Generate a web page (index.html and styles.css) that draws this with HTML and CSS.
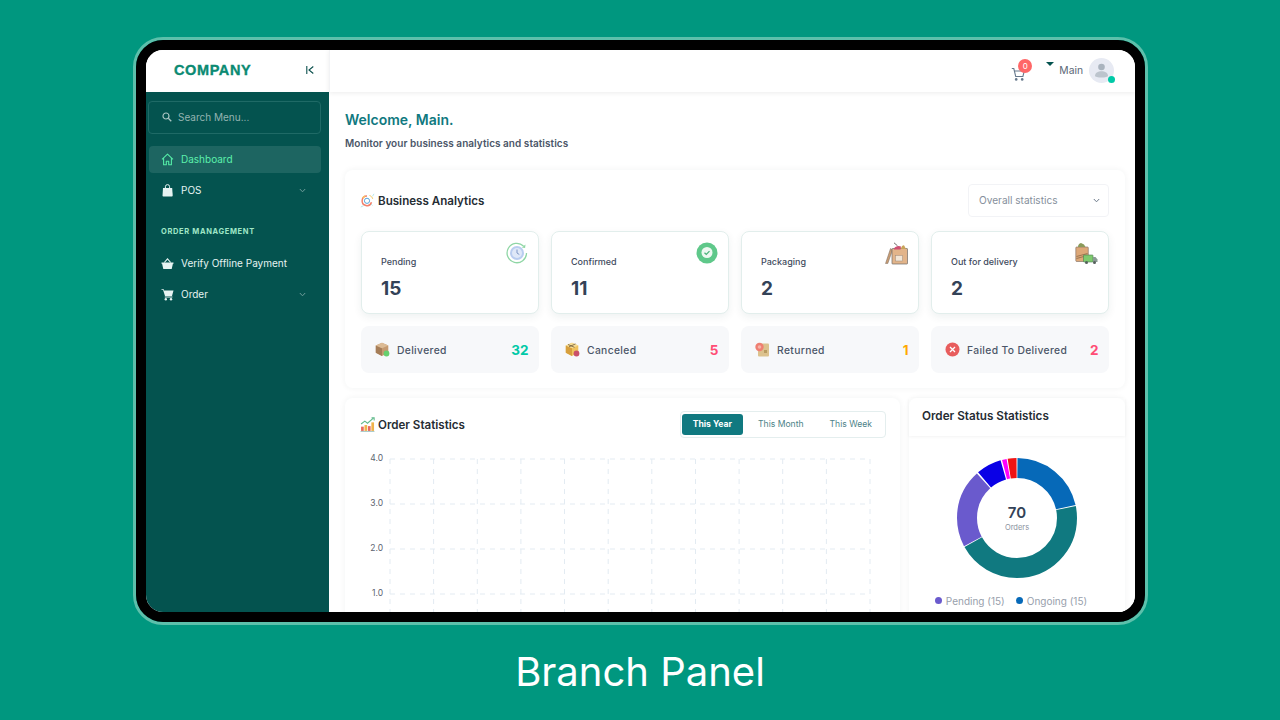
FILE: index.html
```html
<!DOCTYPE html>
<html lang="en">
<head>
  <meta charset="UTF-8" />
  <title>Branch Panel</title>
  <link rel="stylesheet" href="styles.css">
</head>
<body>
  <div class="device">
    <div class="screen">

      <div class="sidebar">
        <div class="brand">
          <span class="logo">COMPANY</span>
          <svg class="collapse" width="8" height="8" viewBox="0 0 8 8"><path d="M.8 0v8M7.300 .5 3 4l4.300 3.500" fill="none" stroke="#0a4f4c" stroke-width="1.100"/></svg>
        </div>
        <div class="side-body">
          <div class="search">
            <svg width="10" height="10" viewBox="0 0 10 10"><circle cx="4" cy="4" r="3" fill="none" stroke="#a9c4c2" stroke-width="1.2"/><path d="M6.3 6.3 9.3 9.3" stroke="#a9c4c2" stroke-width="1.3"/></svg>
            <span>Search Menu...</span>
          </div>
          <a class="nav-item active">
            <svg width="13" height="13" viewBox="0 0 13 13"><path d="M1 6.3 6.5 1.2 12 6.3M2.6 5.2v6.6h2.7V8.2h2.4v3.6h2.7V5.2" fill="none" stroke="#54eba6" stroke-width="1.1" stroke-linejoin="round"/></svg>
            <span>Dashboard</span>
          </a>
          <a class="nav-item">
            <svg width="13" height="13" viewBox="0 0 13 13"><path d="M2 4h9.2l.5 7.6a.9.9 0 0 1-.9.9H2.400a.9.9 0 0 1-.9-.9z" fill="#e6f3f2"/><path d="M4.400 5V2.700a2.100 2.100 0 0 1 4.200 0V5" fill="none" stroke="#e6f3f2" stroke-width="1"/></svg>
            <span>POS</span>
            <svg class="chev" width="7" height="5" viewBox="0 0 7 5"><path d="M.8 1 3.500 3.800 6.200 1" fill="none" stroke="#6f9d9a" stroke-width="1"/></svg>
          </a>
          <div class="nav-label">ORDER MANAGEMENT</div>
          <a class="nav-item">
            <svg width="13" height="13" viewBox="0 0 13 13"><path d="M.5 5.500h12v1.200h-.6L10.700 12H2.300L1.100 6.700H.5z" fill="#e6f3f2"/><path d="M3.300 5.500 6.500 1.800l3.200 3.700" fill="none" stroke="#e6f3f2" stroke-width="1.100"/></svg>
            <span>Verify Offline Payment</span>
          </a>
          <a class="nav-item">
            <svg width="13" height="13" viewBox="0 0 13 13"><path d="M.5 1h2l.5 1.500h9.500L11 8H4L2 1.800H.5z" fill="#e6f3f2"/><path d="M3.800 8.500h7.600v1H3.800z" fill="#e6f3f2"/><circle cx="4.800" cy="11.300" r="1.200" fill="#e6f3f2"/><circle cx="10" cy="11.300" r="1.200" fill="#e6f3f2"/></svg>
            <span>Order</span>
            <svg class="chev" width="7" height="5" viewBox="0 0 7 5"><path d="M.8 1 3.500 3.800 6.200 1" fill="none" stroke="#6f9d9a" stroke-width="1"/></svg>
          </a>
        </div>
      </div>

      <div class="main">
        <div class="topbar">
          <div class="cart">
            <svg width="15" height="15" viewBox="0 0 15 15"><path d="M.8 1.500h2l1.900 8h7.200l1.400-5.500H3.500" fill="none" stroke="#66798c" stroke-width="1.100"/><circle cx="5.200" cy="12.400" r="1.300" fill="#66798c"/><circle cx="11.200" cy="12.400" r="1.300" fill="#66798c"/></svg>
            <span class="cart-badge">0</span>
          </div>
          <span class="caret"></span>
          <span class="user-name">Main</span>
          <div class="avatar">
            <svg width="25" height="25" viewBox="0 0 25 25"><circle cx="12.500" cy="12.500" r="12.500" fill="#e7eaf3"/><circle cx="12.500" cy="9" r="3.300" fill="#a9b3be"/><path d="M6 18c0-3.200 3-4.800 6.500-4.800S19 14.800 19 18c0 .9-3 1.500-6.500 1.500S6 18.900 6 18z" fill="#bcc4cd"/></svg>
            <span class="online"></span>
          </div>
        </div>

        <div class="content">
          <h1 class="welcome">Welcome, Main.</h1>
          <p class="subtitle">Monitor your business analytics and statistics</p>

          <div class="card analytics">
            <div class="card-head">
              <div class="card-title">
                <svg width="15" height="15" viewBox="0 0 15 15"><path d="M7 3a4.800 4.800 0 1 0 4.500 6.300" fill="none" stroke="#f2816b" stroke-width="1.500"/><path d="M2.600 5 5 3" stroke="#f7c35f" stroke-width="1.500"/><circle cx="7" cy="7.800" r="2.600" fill="none" stroke="#5aa5d8" stroke-width="1"/><path d="M9.500 2.500c1.700.5 2.800 1.800 3.200 3.300" fill="none" stroke="#f3c75e" stroke-width="1"/><path d="M14 .8l-1.500 2.500M.8 14l2.700-1.200M11 11l1.500 1.500" fill="none" stroke="#a5e3e6" stroke-width=".8"/></svg>
                <span>Business Analytics</span>
              </div>
              <div class="select">
                <span>Overall statistics</span>
                <svg width="7" height="5" viewBox="0 0 7 5"><path d="M.8 1 3.500 3.800 6.200 1" fill="none" stroke="#6c7a8a" stroke-width="1"/></svg>
              </div>
            </div>

            <div class="stat-grid">
              <div class="stat">
                <div class="stat-label">Pending</div>
                <div class="stat-value">15</div>
                <svg class="stat-icon" width="22" height="22" viewBox="0 0 22 22"><path d="M20.500 11A9.700 9.700 0 1 1 17.500 4" fill="none" stroke="#8fd6a5" stroke-width="1.300"/><path d="m19.500 2.500-.4 3.500-3.300-.6z" fill="#8fd6a5"/><circle cx="11" cy="11" r="7" fill="#b9cdf0"/><circle cx="11" cy="11" r="5" fill="#dfe8f8"/><path d="M11 7.500V11l2.300 1.500" fill="none" stroke="#7e97c6" stroke-width="1"/></svg>
              </div>
              <div class="stat">
                <div class="stat-label">Confirmed</div>
                <div class="stat-value">11</div>
                <svg class="stat-icon" width="22" height="22" viewBox="0 0 22 22"><circle cx="11" cy="11" r="10.500" fill="#5fc88a"/><path d="M11 .5A10.500 10.500 0 0 1 11 21.500 10 10 0 0 0 11 .5z" fill="#3ea56c"/><circle cx="11" cy="10.500" r="5.500" fill="#eef8f1"/><path d="m8.500 10.700 1.800 1.700 3.200-3.300" fill="none" stroke="#4bb37a" stroke-width="1.300"/></svg>
              </div>
              <div class="stat">
                <div class="stat-label">Packaging</div>
                <div class="stat-value">2</div>
                <svg class="stat-icon" width="23" height="23" viewBox="0 0 23 23"><path d="M5.500 6.500 .5 21.500h2.300L7.500 8z" fill="#c79c72" stroke="#7a6a60" stroke-width=".5"/><rect x="7" y="6.500" width="15.500" height="15.500" rx=".6" fill="#e2b48a" stroke="#6f6a68" stroke-width=".7"/><path d="M9 6.500c1-2.500 5-3.200 7-2l-.5 3H9z" fill="#cf4f72"/><path d="M16 7c0-2.500 1.500-3.600 3-3.800L21 7z" fill="#c9a45a"/><path d="M9 .8 12.500 3.800" stroke="#6f6a68" stroke-width="1"/><rect x="10.500" y="13.500" width="7" height="5.500" fill="#f2e5d5" stroke="#9b8a7c" stroke-width=".5"/></svg>
              </div>
              <div class="stat">
                <div class="stat-label">Out for delivery</div>
                <div class="stat-value">2</div>
                <svg class="stat-icon" width="23" height="23" viewBox="0 0 23 23"><rect x=".8" y="5" width="12.500" height="14.500" rx=".8" fill="#dda878" stroke="#7a6a60" stroke-width=".6"/><path d="M3 5c0-2 1-3.500 3-4l3 1.500L10.500 5z" fill="#8a9a5a"/><path d="m1.500 14.500 11-3M1.500 16.500l11-3" stroke="#8a6a48" stroke-width=".8"/><rect x="8.500" y="13" width="9.500" height="7" rx=".6" fill="#7ecb6e" stroke="#4d7a52" stroke-width=".6"/><path d="M18 15h2.500l2 2.500V20H18z" fill="#8a9a94"/><circle cx="11.500" cy="20.500" r="1.500" fill="#55605c"/><circle cx="19.500" cy="20.500" r="1.500" fill="#55605c"/></svg>
              </div>

              <div class="mini">
                <svg width="15" height="15" viewBox="0 0 15 15"><path d="M7 .8 13.300 3.500v7.300L7 14 .8 10.800V3.500z" fill="#c59a70"/><path d="M7 6.300V14L.8 10.800V3.500z" fill="#a57d58"/><path d="M.8 3.500 7 .8l6.300 2.700L7 6.300z" fill="#dcbb95"/><circle cx="11.500" cy="11.500" r="2.900" fill="#66cf6e"/></svg>
                <span class="mini-label">Delivered</span>
                <span class="mini-num green">32</span>
              </div>
              <div class="mini">
                <svg width="15" height="15" viewBox="0 0 15 15"><path d="M7 .8 13.300 3.500v7.300L7 14 .8 10.800V3.500z" fill="#efc25e"/><path d="M7 6.300V14L.8 10.800V3.500z" fill="#d79f3c"/><path d="M.8 3.500 7 .8l6.300 2.700L7 6.300z" fill="#f6dc94"/><path d="M3 2.500 9.500 5.300M10.500 1.900 4 4.800" stroke="#6f5a3a" stroke-width=".8"/><circle cx="11.500" cy="11.500" r="2.900" fill="#c9506a"/></svg>
                <span class="mini-label">Canceled</span>
                <span class="mini-num pink">5</span>
              </div>
              <div class="mini">
                <svg width="15" height="15" viewBox="0 0 15 15"><rect x="3" y="1.500" width="11" height="13" rx="1" fill="#dcc28e"/><path d="M9 8h3v3H9z" fill="#b89c62"/><circle cx="4.500" cy="5" r="4.200" fill="#ef7f72"/><circle cx="4.500" cy="5" r="1.800" fill="#f7b3a8"/></svg>
                <span class="mini-label">Returned</span>
                <span class="mini-num orange">1</span>
              </div>
              <div class="mini">
                <svg width="15" height="15" viewBox="0 0 15 15"><circle cx="7.500" cy="7.500" r="7" fill="#e85d5d"/><path d="m5 5 5 5M10 5l-5 5" stroke="#fff" stroke-width="1.300"/></svg>
                <span class="mini-label">Failed To Delivered</span>
                <span class="mini-num pink">2</span>
              </div>
            </div>
          </div>

          <div class="bottom-row">
            <div class="card order-stats">
              <div class="order-head">
                <div class="card-title">
                  <svg width="15" height="15" viewBox="0 0 14 14"><rect x="1" y="9" width="2.500" height="4" fill="#e86a5c"/><rect x="4.200" y="7.500" width="2.500" height="5.500" fill="#f0b34a"/><rect x="7.400" y="8.500" width="2.500" height="4.500" fill="#e86a5c"/><rect x="10.600" y="5" width="2.500" height="8" fill="#f0b34a"/><path d="M1 6.500 4.500 3.800l2.500 2 5.500-4.800" fill="none" stroke="#5fb98a" stroke-width="1"/><path d="m10.800.8h2.400v2.400" fill="none" stroke="#5fb98a" stroke-width="1"/><path d="M.5 13.500h13" stroke="#7aa" stroke-width=".6"/></svg>
                  <span>Order Statistics</span>
                </div>
                <div class="tabs">
                  <span class="tab on">This Year</span>
                  <span class="tab">This Month</span>
                  <span class="tab">This Week</span>
                </div>
              </div>
              <svg class="chart" width="526" height="175" viewBox="0 0 526 175">
                <g class="grid-lines">
                  <path d="M30 9H510M30 54H510M30 99H510M30 144H510"/>
                  <path d="M30 9V175M73.600 9V175M117.300 9V175M160.900 9V175M204.500 9V175M248.200 9V175M291.800 9V175M335.500 9V175M379.100 9V175M422.700 9V175M466.400 9V175M510 9V175"/>
                </g>
                <g class="axis-labels">
                  <text x="23" y="11">4.0</text>
                  <text x="23" y="56">3.0</text>
                  <text x="23" y="101">2.0</text>
                  <text x="23" y="146">1.0</text>
                </g>
              </svg>
            </div>

            <div class="card order-status">
              <div class="status-head">Order Status Statistics</div>
              <div class="status-body">
                <div class="donut">
                  <svg width="122" height="122" viewBox="0 0 122 122">
                    <g transform="rotate(-90 61 61)" fill="none" stroke-width="20">
                      <circle cx="61" cy="61" r="50" pathLength="360" stroke="#0669b8" stroke-dasharray="77 283" stroke-dashoffset="-0.5"/>
                      <circle cx="61" cy="61" r="50" pathLength="360" stroke="#107980" stroke-dasharray="162.500 197.500" stroke-dashoffset="-78.500"/>
                      <circle cx="61" cy="61" r="50" pathLength="360" stroke="#6a5acd" stroke-dasharray="76 284" stroke-dashoffset="-242"/>
                      <circle cx="61" cy="61" r="50" pathLength="360" stroke="#0a00e6" stroke-dasharray="24.500 335.500" stroke-dashoffset="-319.500"/>
                      <circle cx="61" cy="61" r="50" pathLength="360" stroke="#ff00ff" stroke-dasharray="4.500 355.500" stroke-dashoffset="-345.500"/>
                      <circle cx="61" cy="61" r="50" pathLength="360" stroke="#f01414" stroke-dasharray="8.500 351.500" stroke-dashoffset="-351"/>
                    </g>
                  </svg>
                  <div class="donut-center">
                    <strong>70</strong>
                    <span>Orders</span>
                  </div>
                </div>
                <div class="legend">
                  <span class="legend-item"><i class="dot purple"></i>Pending (15)</span>
                  <span class="legend-item"><i class="dot blue"></i>Ongoing (15)</span>
                </div>
              </div>
            </div>
          </div>
        </div>
      </div>

    </div>
  </div>
  <div class="caption">Branch Panel</div>
</body>
</html>
```

FILE: styles.css
```css
* {
  box-sizing: border-box;
}

html, body {
  height: 720px;
  overflow: hidden;
}

body {
  margin: 0;
  background: #00977f;
  font-family: Inter, 'Noto Sans', sans-serif;
  color: #334257;
}

.device {
  width: 1015px;
  height: 588px;
  margin: 37px 0 0 133px;
  border: 3px solid #5cc0ab;
  border-radius: 30px;
}

.screen {
  display: flex;
  width: 1009px;
  height: 582px;
  border: 10px solid #000;
  border-radius: 27px;
  background: #fff;
  overflow: hidden;
}

.caption {
  margin-top: 23px;
  text-align: center;
  font-size: 40px;
  line-height: 48px;
  color: #fff;
}

/* sidebar */
.sidebar {
  width: 183px;
  flex: none;
  display: flex;
  flex-direction: column;
}

.brand {
  height: 42px;
  flex: none;
  display: flex;
  align-items: center;
  justify-content: space-between;
  padding: 0 15px 2px 28px;
  background: #fff;
}

.logo {
  font-family: 'Liberation Sans', Arial, sans-serif;
  font-size: 14.5px;
  font-weight: 700;
  letter-spacing: .6px;
  color: #0b8a72;
  -webkit-text-stroke: .35px #0b8a72;
}

.side-body {
  flex: 1;
  padding: 9px 8px 0 2px;
  background: #04534f;
}

.search {
  display: flex;
  align-items: center;
  gap: 6px;
  height: 33px;
  padding: 0 0 1px 13px;
  margin-bottom: 12px;
  border: 1px solid #1f6a66;
  border-radius: 4px;
  font-size: 10px;
  color: #93b3b1;
}

.nav-item {
  display: flex;
  align-items: center;
  gap: 7px;
  height: 27px;
  margin: 0 0 4px 1px;
  padding: 0 15px 1px 12px;
  border-radius: 4px;
  font-size: 10px;
  color: #e6f3f2;
}

.nav-item.active {
  background: #1d6561;
  color: #5cf0ac;
}

.chev {
  margin-left: auto;
}

.nav-label {
  margin: 23px 0 13px 13px;
  font-size: 7.5px;
  line-height: 10px;
  font-weight: 700;
  letter-spacing: .65px;
  color: #9fe6c6;
}

/* top bar */
.main {
  flex: 1;
  min-width: 0;
  display: flex;
  flex-direction: column;
}

.topbar {
  position: relative;
  height: 42px;
  flex: none;
  display: flex;
  align-items: center;
  justify-content: flex-end;
  padding: 0 21px 2px 0;
  background: #fff;
  border-left: 1px solid #f2f3f5;
  box-shadow: 0 1px 5px rgba(0, 0, 0, .08);
}

.cart {
  position: relative;
  width: 20px;
  height: 15px;
  margin: 6px 15px 0 0;
}

.cart-badge {
  position: absolute;
  top: -7px;
  left: 7px;
  width: 14px;
  height: 14px;
  border-radius: 50%;
  background: #ff6767;
  color: #fff;
  font-size: 8px;
  line-height: 14px;
  text-align: center;
}

.caret {
  width: 0;
  height: 0;
  margin: 0 5px 12px 0;
  border-left: 4.500px solid transparent;
  border-right: 4.500px solid transparent;
  border-top: 4.500px solid #04534f;
}

.user-name {
  margin-right: 6px;
  font-size: 10.3px;
  color: #5b6777;
}

.avatar {
  position: relative;
  width: 25px;
  height: 25px;
}

.avatar svg {
  display: block;
}

.online {
  position: absolute;
  right: -1px;
  bottom: 0;
  width: 7px;
  height: 7px;
  border-radius: 50%;
  background: #00c9a7;
}

/* content */
.content {
  flex: 1;
  min-height: 0;
  padding: 18px 10px 0 16px;
  background: #fff;
}

.welcome {
  margin: 0;
  font-size: 14px;
  line-height: 20px;
  font-weight: 600;
  color: #107980;
}

.subtitle {
  margin: 6px 0 0;
  font-size: 10px;
  line-height: 14px;
  font-weight: 600;
  letter-spacing: .04px;
  color: #4b5668;
}

.card {
  background: #fff;
  border-radius: 8px;
  box-shadow: 0 0 6px rgba(0, 50, 50, .06);
}

.analytics {
  margin-top: 20px;
  height: 218px;
  padding: 14px 16px 0 16px;
}

.card-head {
  display: flex;
  align-items: center;
  justify-content: space-between;
  margin-bottom: 14px;
}

.card-title {
  display: flex;
  align-items: center;
  gap: 3px;
  margin-left: -1px;
  font-size: 11.6px;
  font-weight: 600;
  color: #262d34;
}

.select {
  display: flex;
  align-items: center;
  justify-content: space-between;
  width: 141px;
  height: 33px;
  padding: 0 8px 1px 10px;
  border: 1px solid #f2f3f6;
  border-radius: 4px;
  font-size: 10.1px;
  color: #868f9c;
}

.stat-grid {
  display: grid;
  grid-template-columns: repeat(4, 177.5px);
  gap: 12px 12.5px;
}

.stat {
  position: relative;
  height: 83px;
  padding: 24px 19px 0;
  border: 1px solid #e2eeec;
  border-radius: 8px;
  background: #fff;
  box-shadow: 0 3px 8px rgba(0, 60, 60, .07);
}

.stat-label {
  font-size: 9px;
  line-height: 12px;
  font-weight: 500;
  color: #3f4b5e;
}

.stat-value {
  margin-top: 9px;
  font-size: 19px;
  line-height: 23px;
  font-weight: 700;
  color: #334257;
}

.stat-icon {
  position: absolute;
  top: 10px;
  right: 10px;
}

.mini {
  display: flex;
  align-items: center;
  gap: 7px;
  height: 47px;
  padding: 0 10px 0 14px;
  border-radius: 8px;
  background: #f7f8fa;
}

.mini-label {
  font-size: 10.3px;
  font-weight: 500;
  letter-spacing: .35px;
  color: #4b5668;
}

.mini-num {
  margin-left: auto;
  font-size: 13.5px;
  font-weight: 700;
}

.green { color: #00c9a7; }
.pink { color: #ff4d75; }
.orange { color: #ffa800; }

/* bottom cards */
.bottom-row {
  display: flex;
  gap: 9px;
  margin-top: 10px;
}

.order-stats {
  width: 555px;
  height: 240px;
  padding: 13px 14px 0 16px;
}

.order-head {
  display: flex;
  align-items: center;
  justify-content: space-between;
}

.tabs {
  display: flex;
  align-items: center;
  height: 27px;
  border: 1px solid #e4eeee;
  border-radius: 4px;
}

.tab {
  padding: 0 13px;
  font-size: 8.6px;
  line-height: 21px;
  color: #4d8288;
}

.tab.on {
  margin: 0 2px 0 1px;
  padding: 0 11px;
  border-radius: 3px;
  background: #107980;
  color: #fff;
  font-weight: 700;
}

.chart {
  display: block;
  margin: 12px 0 0 -1px;
}

.grid-lines path {
  fill: none;
  stroke: #e3ebf2;
  stroke-width: 1;
  stroke-dasharray: 5 5;
}

.axis-labels text {
  font-size: 8.5px;
  fill: #5c6470;
  text-anchor: end;
}

.order-status {
  width: 216px;
  height: 240px;
}

.status-head {
  height: 38px;
  padding-left: 13px;
  font-size: 11.7px;
  line-height: 36px;
  font-weight: 600;
  color: #262d34;
  box-shadow: 0 1px 3px rgba(0, 0, 0, .05);
}

.status-body {
  display: flex;
  flex-direction: column;
  align-items: center;
  padding-top: 21px;
}

.donut {
  position: relative;
  width: 122px;
  height: 122px;
}

.donut svg {
  display: block;
}

.donut-center {
  position: absolute;
  inset: 0;
  display: flex;
  flex-direction: column;
  align-items: center;
  justify-content: center;
}

.donut-center strong {
  font-size: 15px;
  line-height: 18px;
  font-weight: 600;
  color: #334257;
}

.donut-center span {
  font-size: 7.5px;
  line-height: 11px;
  color: #8a92a0;
}

.legend {
  display: flex;
  gap: 11px;
  margin: 16px 12px 0 0;
  font-size: 10px;
  color: #98a0ac;
}

.legend-item {
  display: flex;
  align-items: center;
  gap: 4px;
}

.dot {
  width: 7px;
  height: 7px;
  margin-top: -2px;
  border-radius: 50%;
}

.dot.purple { background: #6a5acd; }
.dot.blue { background: #0669b8; }
```
